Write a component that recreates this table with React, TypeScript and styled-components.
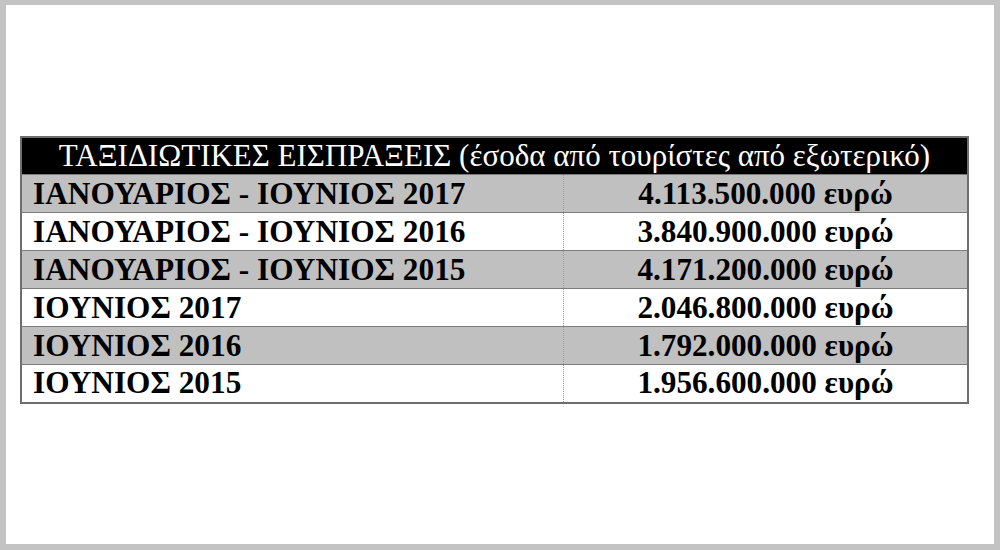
import styled, { createGlobalStyle } from 'styled-components';

const GlobalStyle = createGlobalStyle`
  html, body {
    margin: 0;
    padding: 0;
    background: #ffffff;
  }
`;

const rows = [
  { label: 'ΙΑΝΟΥΑΡΙΟΣ - ΙΟΥΝΙΟΣ 2017', value: '4.113.500.000 ευρώ' },
  { label: 'ΙΑΝΟΥΑΡΙΟΣ - ΙΟΥΝΙΟΣ 2016', value: '3.840.900.000 ευρώ' },
  { label: 'ΙΑΝΟΥΑΡΙΟΣ - ΙΟΥΝΙΟΣ 2015', value: '4.171.200.000 ευρώ' },
  { label: 'ΙΟΥΝΙΟΣ 2017', value: '2.046.800.000 ευρώ' },
  { label: 'ΙΟΥΝΙΟΣ 2016', value: '1.792.000.000 ευρώ' },
  { label: 'ΙΟΥΝΙΟΣ 2015', value: '1.956.600.000 ευρώ' },
];

const App = () => {
  return (
    <>
      <GlobalStyle />
      <Frame>
        <Sheet>
          <Table>
            <thead>
              <tr>
                <HeadCell colSpan={2}>
                  ΤΑΞΙΔΙΩΤΙΚΕΣ ΕΙΣΠΡΑΞΕΙΣ (έσοδα από τουρίστες από εξωτερικό)
                </HeadCell>
              </tr>
            </thead>
            <tbody>
              {rows.map((r, i) => (
                <Row key={r.label} $shaded={i % 2 === 0}>
                  <LabelCell>{r.label}</LabelCell>
                  <ValueCell>{r.value}</ValueCell>
                </Row>
              ))}
            </tbody>
          </Table>
        </Sheet>
      </Frame>
    </>
  );
};

const Frame = styled.div`
  width: 1000px;
  height: 550px;
  box-sizing: border-box;
  background: #c3c3c3;
  padding: 5px 6px 6px 6px;
`;

const Sheet = styled.div`
  height: 100%;
  box-sizing: border-box;
  background: #ffffff;
  padding: 131px 0 0 14px;
`;

const Table = styled.table`
  width: 949px;
  border-collapse: collapse;
  border: 2px solid #6e6e6e;
  font-family: 'Liberation Serif', 'Times New Roman', serif;
  color: #000000;
`;

const HeadCell = styled.th`
  height: 36px;
  padding: 0;
  background: #000000;
  color: #ffffff;
  font-weight: 400;
  font-size: 31px;
  text-align: center;
  line-height: 36px;
  white-space: nowrap;
`;

const Row = styled.tr<{ $shaded: boolean }>`
  height: 38px;
  background: ${(p) => (p.$shaded ? '#c0c0c0' : '#ffffff')};
  border-top: 1px solid #7c7c7c;
`;

const LabelCell = styled.td`
  width: 530px;
  padding: 0 0 0 11px;
  font-weight: 700;
  font-size: 31.3px;
  line-height: 36px;
  border-right: 1px dotted #8e9bb4;
  white-space: nowrap;
`;

const ValueCell = styled.td`
  padding: 0;
  font-weight: 700;
  font-size: 31.2px;
  line-height: 36px;
  text-align: center;
  white-space: nowrap;
`;

export default App;
